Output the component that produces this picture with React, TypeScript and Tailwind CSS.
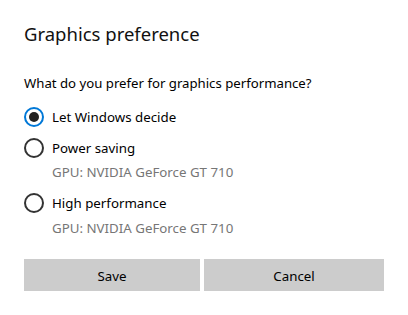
import React from "react";

function Radio({ checked }: { checked?: boolean }) {
  return checked ? (
    <div className="w-[20px] h-[20px] rounded-full border-2 border-[#0078d7] flex items-center justify-center shrink-0">
      <div className="w-[10px] h-[10px] rounded-full bg-[#222]" />
    </div>
  ) : (
    <div className="w-[20px] h-[20px] rounded-full border-2 border-[#333] shrink-0" />
  );
}

export default function App() {
  const font = { fontFamily: '"Noto Sans", "Open Sans", sans-serif' };
  return (
    <div className="w-[408px] h-[315px] bg-white text-black flex flex-col pl-[24px] pt-[20px]" style={font}>
      <div className="h-[28px] leading-[28px] text-[18.5px] text-[#111]">Graphics preference</div>
      <div className="mt-[25px] h-[20px] leading-[20px] text-[13.2px]">What do you prefer for graphics performance?</div>
      <div className="mt-[14px] h-[20px] flex items-center gap-[8px]">
        <Radio checked />
        <span className="text-[13.3px] leading-[20px]">Let Windows decide</span>
      </div>
      <div className="mt-[11px] h-[20px] flex items-center gap-[8px]">
        <Radio />
        <span className="text-[13.3px] leading-[20px]">Power saving</span>
      </div>
      <div className="mt-[4px] h-[20px] leading-[20px] text-[13.3px] text-[#767676] pl-[28px]">GPU: NVIDIA GeForce GT 710</div>
      <div className="mt-[11px] h-[20px] flex items-center gap-[8px]">
        <Radio />
        <span className="text-[13.3px] leading-[20px]">High performance</span>
      </div>
      <div className="mt-[5px] h-[20px] leading-[20px] text-[13.3px] text-[#767676] pl-[28px]">GPU: NVIDIA GeForce GT 710</div>
      <div className="mt-[21px] flex gap-[4px]">
        <button className="w-[176px] h-[32px] pt-[3px] bg-[#cccccc] text-[13.3px] text-black">Save</button>
        <button className="w-[180px] h-[32px] pt-[3px] bg-[#cccccc] text-[13.3px] text-black">Cancel</button>
      </div>
    </div>
  );
}
